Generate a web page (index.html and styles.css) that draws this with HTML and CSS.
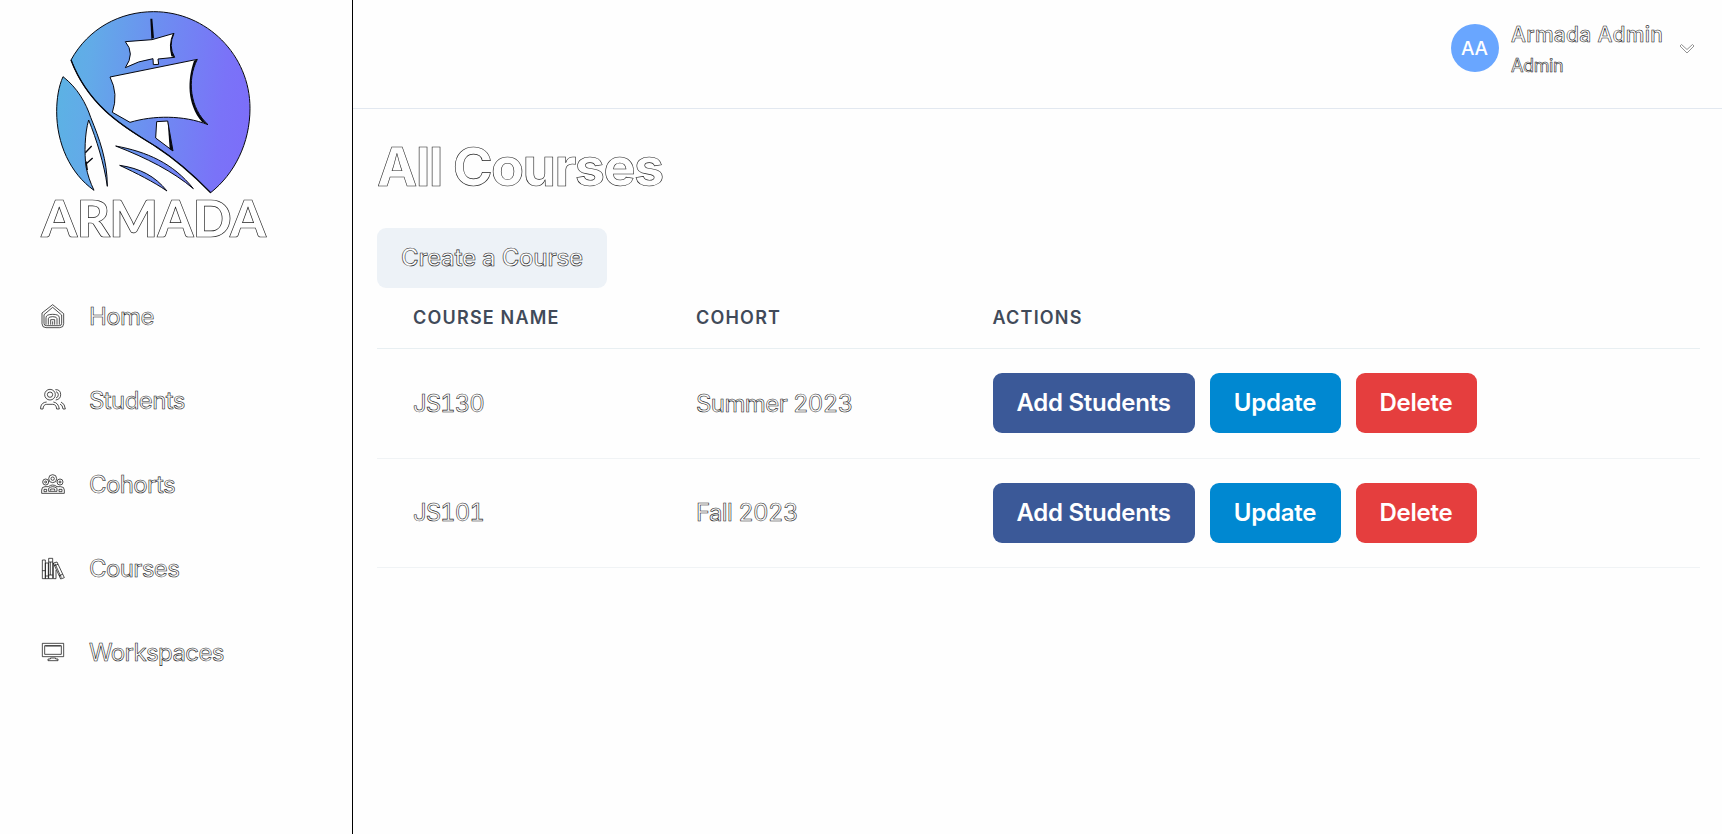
FILE: index.html
```html
<!DOCTYPE html>
<html lang="en">
<head>
<meta charset="utf-8">
<title>Armada - All Courses</title>
<link rel="stylesheet" href="styles.css">
</head>
<body>
<div class="app">
  <aside class="sidebar">
    <svg class="logo" viewBox="0 0 750 750" role="img" aria-label="Armada">
      <defs>
        <linearGradient id="sea" gradientUnits="userSpaceOnUse" x1="80" y1="300" x2="660" y2="360">
          <stop offset="0" stop-color="#5cb2e4"/>
          <stop offset="0.15" stop-color="#62abe8"/>
          <stop offset="0.5" stop-color="#6d8df1"/>
          <stop offset="0.85" stop-color="#7a73f8"/>
          <stop offset="1" stop-color="#7c6ef9"/>
        </linearGradient>
      </defs>
      <g fill="url(#sea)" stroke="#05070f" stroke-width="3" stroke-linejoin="round">
        <path d="M123 180C175 85 270 35 371 35C530 35 660 165 660 325C660 430 613 522 542 578C480 515 430 474 378 440C300 390 180 330 123 180Z"/>
        <path d="M99 230C143 264 168 310 182 352C208 416 232 480 232 559C222 490 200 420 176 360C164 400 163 460 168 500C173 525 181 548 192 571C120 520 80 430 80 335C80 295 86 260 99 230Z"/>
        <path d="M257 438C350 455 430 490 490 566C430 515 350 474 257 438Z"/>
        <path d="M269 496C330 505 375 528 411 573C370 545 320 520 269 496Z"/>
      </g>
      <g class="logo-sails">
        <path d="M286 125L366 119L432 100Q414 138 434 172L384 177L386 193L370 194L369 176Q325 182 286 203Q316 160 286 125Z"/>
        <path d="M240 231L502 178C470 240 480 325 534 374C460 345 370 346 300 367L247 337Q266 282 240 231Z"/>
        <path d="M380 365L413 363L429 453L377 414Z"/>
      </g>
      <g class="logo-shade">
        <path d="M361 56L367 56L372 114L364 117Z"/>
        <path d="M502 178C470 240 480 325 534 374L516 366C470 310 472 240 492 182Z"/>
        <path d="M413 363L429 453L419 448Z"/>
        <path d="M432 100Q414 138 434 172L424 169Q414 132 428 102Z"/>
      </g>
      <path class="logo-crest" d="M123 180C180 330 300 390 378 440C430 474 480 515 542 578M166 458L185 438M168 492L188 474M172 510L168 484"/>
      <text class="logo-word" x="34" y="710" textLength="674" lengthAdjust="spacing">ARMADA</text>
    </svg>

    <nav class="nav">
      <a class="nav-item">
        <svg class="icon" viewBox="0 0 78 78"><path d="M38 2L71 29V59Q71 71 59 71H18Q6 71 6 59V27ZM38 10L65 33V58Q65 65 58 65H19Q12 65 12 58V32ZM18 62V41Q18 31 38 31Q58 31 58 41V62M25 62V44Q25 38 38 38Q51 38 51 44V62M32 62V47H44V62M38 52V62"/></svg>
        <span class="outline">Home</span>
      </a>
      <a class="nav-item">
        <svg class="icon" viewBox="0 0 78 78"><circle cx="30" cy="20" r="16"/><circle cx="30" cy="20" r="8"/><path d="M46 5Q62 4 62 20Q62 34 47 36M48 11Q55 13 55 20Q55 28 48 30M2 63V57Q5 43 20 42M40 42Q55 44 58 63H50Q49 49 38 49H20Q10 49 9 63H2M63 42Q75 47 76 63H69Q68 51 60 48"/></svg>
        <span class="outline">Students</span>
      </a>
      <a class="nav-item">
        <svg class="icon" viewBox="0 0 78 78"><circle cx="38" cy="20" r="12"/><circle cx="38" cy="20" r="5"/><circle cx="17" cy="30" r="9"/><circle cx="17" cy="30" r="3"/><circle cx="60" cy="30" r="9"/><circle cx="60" cy="30" r="3"/><path d="M5 64V54Q5 44 15 44H25Q38 34 51 44H62Q73 44 73 54V64ZM12 59V52H20V59ZM26 58V49Q38 39 51 49V58ZM57 59V52H66V59ZM32 56V51H44V56"/></svg>
        <span class="outline">Cohorts</span>
      </a>
      <a class="nav-item">
        <svg class="icon" viewBox="0 0 78 78"><path d="M7 12H16V68H7ZM16 21H25V68H16ZM26 7H38V68H26ZM7 44H16M16 60H25M26 18H38M26 57H38M31 18V57M40 21L51 18L73 65L62 69ZM45 23L64 65M43 29L54 25M57 59L68 55M40 21V68H48V42"/></svg>
        <span class="outline">Courses</span>
      </a>
      <a class="nav-item">
        <svg class="icon" viewBox="0 0 78 78"><path d="M7 10H71V50H7ZM14 17H64V43H14ZM26 57H31V54H47V57H54V62H24V57ZM16 18H62"/></svg>
        <span class="outline">Workspaces</span>
      </a>
    </nav>
  </aside>

  <div class="main">
    <header class="topbar">
      <div class="avatar">AA</div>
      <div class="user">
        <span class="user-name outline">Armada Admin</span>
        <span class="user-role outline">Admin</span>
      </div>
      <svg class="chevron" viewBox="0 0 16 12"><path d="M1 3L2.500 1.500L8 6.500L13.500 1.500L15 3L8 10Z"/></svg>
    </header>

    <main class="content">
      <h1 class="title outline">All Courses</h1>
      <button class="btn btn-create"><span class="outline">Create a Course</span></button>
      <div class="table">
        <div class="row head"><span>COURSE NAME</span><span>COHORT</span><span>ACTIONS</span></div>
        <div class="row">
          <span class="outline cell code">JS130</span><span class="outline cell">Summer 2023</span>
          <div class="actions"><button class="btn btn-add">Add Students</button><button class="btn btn-update">Update</button><button class="btn btn-delete">Delete</button></div>
        </div>
        <div class="row">
          <span class="outline cell code">JS101</span><span class="outline cell">Fall 2023</span>
          <div class="actions"><button class="btn btn-add">Add Students</button><button class="btn btn-update">Update</button><button class="btn btn-delete">Delete</button></div>
        </div>
      </div>
    </main>
  </div>
</div>
</body>
</html>
```
FILE: styles.css
```css
* { box-sizing: border-box; }
body { margin: 0; background: #fefefe; font-family: Inter, "Liberation Sans", sans-serif; font-size: 24px; }
.app { display: flex; height: 834px; overflow: hidden; }

.sidebar { width: 353px; flex: none; border-right: 1px solid #000; }
.logo { display: block; width: 250px; height: 250px; margin-left: 30px; }
.logo-sails { fill: #fff; stroke: #05070f; stroke-width: 3; }
.logo-shade { fill: #05070f; }
.logo-crest { fill: none; stroke: #05070f; stroke-width: 4; }
.logo-word { font-family: Lato, sans-serif; font-size: 154px; font-weight: 900; fill: #fff; stroke: #222; stroke-width: 2; }

.nav { display: flex; flex-direction: column; padding: 25px 0 0 40px; }
.nav-item { display: flex; align-items: center; gap: 23px; height: 84px; letter-spacing: -0.6px; }
.nav-item span { padding-bottom: 1px; }
.icon { width: 26px; height: 26px; fill: none; stroke: #111; stroke-width: 2.2; }

.outline { color: #fefefe; -webkit-text-stroke: 0.6px #1c1c1c; }

.main { flex: 1; min-width: 0; }
.topbar { display: flex; align-items: flex-start; justify-content: flex-end; height: 109px; padding: 24px 27px 0 0; border-bottom: 1px solid #e2e8f0; }
.avatar { display: flex; align-items: center; justify-content: center; width: 48px; height: 48px; border-radius: 50%; background: #69a6ff; color: #fff; font-size: 19px; font-weight: 500; }
.user { display: flex; flex-direction: column; width: 168px; margin: -5px 0 0 12.5px; }
.user-name { font-size: 21px; line-height: 31px; font-weight: 500; letter-spacing: 0.3px; }
.user-role { font-size: 18px; line-height: 31px; letter-spacing: -0.4px; }
.chevron { width: 16px; height: 12px; margin: 19px 0 0; fill: #fff; stroke: #777; stroke-width: 0.8; }

.content { padding: 25px 22px 0 24px; }
.title { margin: 0; font-size: 54px; line-height: 65px; font-weight: 700; letter-spacing: -1.65px; }
.btn { height: 60px; padding: 0 0 1px; border: 0; border-radius: 9px; color: #fff; font: 600 24px Inter, sans-serif; letter-spacing: -0.25px; }
.btn-create { display: block; width: 230px; margin-top: 29px; background: #edf2f7; font-weight: 500; }
.btn-add { width: 202px; background: #3b5998; }
.btn-update { width: 131px; background: #0088d1; }
.btn-delete { width: 121px; background: #e53e3e; }

.row { display: grid; grid-template-columns: 283px 296.5px 1fr; align-items: center; height: 109px; padding: 0 0 1px 36px; border-bottom: 1px solid #f0f3f5; }
.row + .row { height: 110px; }
.row + .row + .row { height: 109px; }
.row.head { height: 61px; padding-bottom: 1px; border-color: #e8eff2; color: #414a59; font-size: 18px; font-weight: 600; letter-spacing: 1.2px; }
.cell { font-variant-numeric: tabular-nums; letter-spacing: -0.6px; }
.code { letter-spacing: -1px; }
.actions { display: flex; gap: 15px; }
```
